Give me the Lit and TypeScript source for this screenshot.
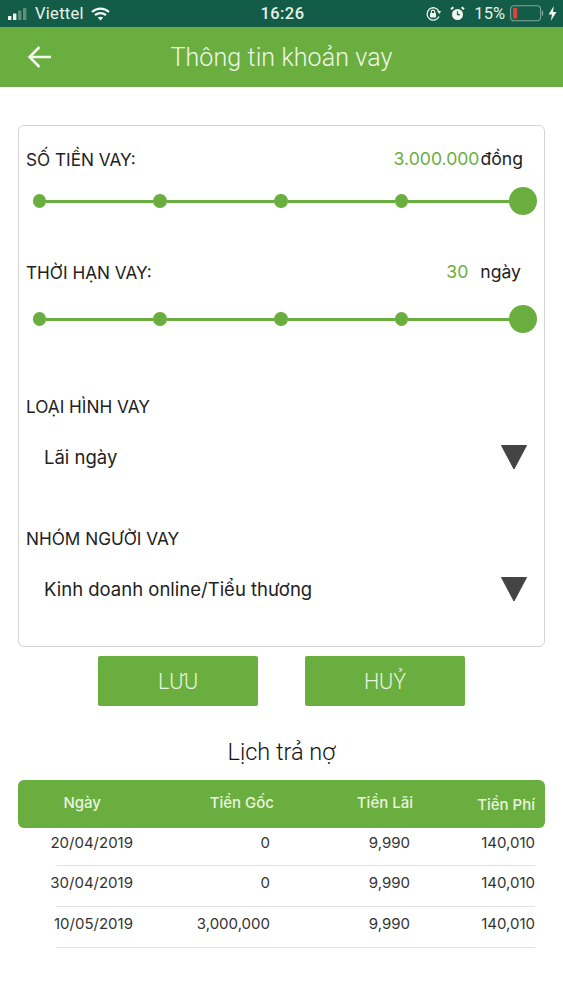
import { LitElement, html, css } from "lit";
import { customElement } from "lit/decorators.js";

const rows = [
  ["20/04/2019", "0", "9,990", "140,010"],
  ["30/04/2019", "0", "9,990", "140,010"],
  ["10/05/2019", "3,000,000", "9,990", "140,010"],
];

@customElement("app-root")
export class AppRoot extends LitElement {
  static styles = css`
    :host { display: block; width: 563px; height: 1000px; background: #fff; font-family: Inter, Roboto, sans-serif; color: #222; overflow: hidden; }
    .status { height: 27px; background: #135c47; color: #e6f2ea; display: grid; grid-template-columns: 1fr auto 1fr; align-items: center; padding: 0 6px 0 8px; box-sizing: border-box; font-size: 16.5px; font-family: Roboto, sans-serif; }
    .sl, .sr { display: flex; align-items: center; }
    .sl { gap: 5px; }
    .sr { justify-content: flex-end; }
    .viettel { letter-spacing: .3px; }
    .time { font-weight: 500; font-size: 16.5px; letter-spacing: .4px; }
    .appbar { height: 60px; background: #6aae40; color: #f0f7e8; display: flex; align-items: center; padding-left: 27px; }
    .appbar svg { display: block; }
    .title { flex: 1; text-align: center; font-family: Roboto, sans-serif; font-size: 25px; font-weight: 300; margin-right: 52px; letter-spacing: .1px; }
    .card { margin: 38px 18px 0; height: 522px; box-sizing: border-box; border: 1px solid #d4d4d4; border-radius: 6px; padding: 0 7px; }
    .lr { display: flex; justify-content: space-between; align-items: center; height: 22px; font-size: 17.2px; }
    .lab { font-weight: 400; color: #222; padding-top: 2px; }
    .val { display: flex; font-size: 17.6px; font-weight: 400; color: #222; padding-top: 1px; }
    .val b { font-weight: 400; color: #6aae40; }
    .amount { margin-top: 21px; padding-right: 14px; }
    .amount b { margin-right: 1px; }
    .term { margin-top: 45px; padding-right: 16px; }
    .term b { margin-right: 12px; }
    .slider { display: flex; align-items: center; height: 28px; padding-left: 6.5px; }
    .s1 { margin-top: 18px; }
    .s2 { margin-top: 23px; }
    .dot { width: 13.5px; height: 13.5px; border-radius: 50%; background: #6aae40; flex: none; }
    .dot.big { width: 28px; height: 28px; margin-left: -7px; margin-right: .5px; }
    .line { height: 3px; flex: 1; background: #6aae40; }
    .sect { font-size: 17.2px; font-weight: 400; height: 22px; line-height: 22px; padding-top: 1px; }
    .s-loan { margin-top: 62px; }
    .s-group { margin-top: 55px; }
    .pick { display: flex; justify-content: space-between; align-items: center; height: 30px; margin-top: 24px; padding: 0 9px 0 18px; font-size: 18.5px; font-weight: 400; color: #222; }
    .pick svg { display: block; }
    .btns { display: flex; justify-content: center; gap: 47px; margin-top: 9px; }
    .btn { width: 160px; height: 50px; background: #6aae40; color: #e9f4df; border-radius: 2px; display: flex; align-items: center; justify-content: center; font-family: Roboto, sans-serif; font-size: 21.5px; font-weight: 300; }
    .sched { text-align: center; font-family: Roboto, sans-serif; font-size: 23.5px; font-weight: 300; color: #111; margin-top: 30px; height: 32px; line-height: 32px; }
    .thead { margin: 12px 18px 0; height: 48px; background: #6aae40; border-radius: 6px; color: #e9f4df; font-size: 15px; font-weight: 500; display: grid; grid-template-columns: 83px 173px 139px 122px; align-items: center; box-sizing: border-box; padding: 0 10px 3px 0; }
    .thead span { text-align: right; }
    .thead .c3 { padding-top: 4px; }
    .row { display: grid; grid-template-columns: 115px 137px 140px 125px; margin: 0 28px 0 18px; height: 41px; box-sizing: border-box; font-size: 15px; font-weight: 400; color: #333; text-align: right; padding-top: 7px; position: relative; }
    .row.first { height: 38px; padding-top: 5px; }
    .row::after { content: ""; position: absolute; left: 38px; right: 0; bottom: 0; height: 1px; background: #e3e3e3; }
  `;

  private slider(cls: string) {
    return html`<div class="slider ${cls}">
      <span class="dot"></span><span class="line"></span>
      <span class="dot"></span><span class="line"></span>
      <span class="dot"></span><span class="line"></span>
      <span class="dot"></span><span class="line"></span>
      <span class="dot big"></span>
    </div>`;
  }

  private caret() {
    return html`<svg width="28" height="26" viewBox="0 0 28 26"><path d="M1.5 1.5H26.5L14 25Z" fill="#444" stroke="#444" stroke-width="1" stroke-linejoin="round"/></svg>`;
  }

  render() {
    return html`
      <div class="status">
        <div class="sl">
          <svg width="22" height="14" viewBox="0 0 22 14">
            <rect x="0" y="9" width="3.4" height="4" rx=".6" fill="#f2f7f2"/>
            <rect x="5" y="6.5" width="3.4" height="6.5" rx=".6" fill="#f2f7f2"/>
            <rect x="10" y="3.5" width="3.4" height="9.5" rx=".6" fill="#5c8f7c"/>
            <rect x="15" y="1" width="3.4" height="12" rx=".6" fill="#5c8f7c"/>
          </svg>
          <span class="viettel">Viettel</span>
          <svg style="margin-left:2px" width="19" height="14" viewBox="0 0 19 14">
            <path d="M1 5C6 .5 13 .5 18 5" fill="none" stroke="#f2f7f2" stroke-width="2.2"/>
            <path d="M4 8.2C7.2 5.4 11.8 5.4 15 8.2" fill="none" stroke="#f2f7f2" stroke-width="2.2"/>
            <path d="M6.8 10.6 9.5 13.5 12.2 10.6C10.6 9.3 8.4 9.3 6.8 10.6Z" fill="#f2f7f2"/>
          </svg>
        </div>
        <div class="time">16:26</div>
        <div class="sr">
          <svg width="17" height="16" viewBox="0 0 17 16" style="margin-right:8px">
            <path d="M13.8 5A6.2 6.2 0 1 0 14 10.5" fill="none" stroke="#f2f7f2" stroke-width="1.3"/>
            <path d="M12 5H16L14.5 8Z" fill="#f2f7f2"/>
            <rect x="5" y="7" width="6" height="4.5" rx=".7" fill="#f2f7f2"/>
            <path d="M6.3 7V5.8A1.7 1.7 0 0 1 9.7 5.8V7" fill="none" stroke="#f2f7f2" stroke-width="1.1"/>
          </svg>
          <svg width="15" height="15" viewBox="0 0 15 15" style="margin-right:9px">
            <circle cx="7.5" cy="8.5" r="5.5" fill="#f2f7f2"/>
            <path d="M7.5 5.2V8.7H10" fill="none" stroke="#135c47" stroke-width="1.2"/>
            <path d="M1 3.2 3.4 1.2M14 3.2 11.6 1.2" stroke="#f2f7f2" stroke-width="2"/>
          </svg>
          <span>15%</span>
          <svg width="34" height="17" viewBox="0 0 34 17" style="margin-left:5px">
            <rect x=".6" y=".8" width="30" height="15" rx="3.5" fill="none" stroke="#7da898" stroke-width="1.1"/>
            <rect x="3" y="3" width="4.2" height="10.5" rx="1" fill="#e0413a"/>
            <path d="M32.5 6v4.5" stroke="#7da898" stroke-width="1.3"/>
          </svg>
          <svg width="9" height="15" viewBox="0 0 9 15" style="margin-left:4px">
            <path d="M5.8 0 .5 8.5H4L2.8 15 8.5 6H5Z" fill="#f2f7f2"/>
          </svg>
        </div>
      </div>
      <div class="appbar">
        <svg width="25" height="24" viewBox="0 0 25 24">
          <path d="M24 12H2.5M12.5 2 2.5 12 12.5 22" fill="none" stroke="#f3f8ec" stroke-width="2.5"/>
        </svg>
        <div class="title">Thông tin khoản vay</div>
      </div>
      <div class="card">
        <div class="lr amount"><span class="lab">SỐ TIỀN VAY:</span><span class="val"><b>3.000.000</b>đồng</span></div>
        ${this.slider("s1")}
        <div class="lr term"><span class="lab">THỜI HẠN VAY:</span><span class="val"><b>30</b>ngày</span></div>
        ${this.slider("s2")}
        <div class="sect s-loan">LOẠI HÌNH VAY</div>
        <div class="pick"><span>Lãi ngày</span>${this.caret()}</div>
        <div class="sect s-group">NHÓM NGƯỜI VAY</div>
        <div class="pick"><span>Kinh doanh online/Tiểu thương</span>${this.caret()}</div>
      </div>
      <div class="btns"><div class="btn">LƯU</div><div class="btn">HUỶ</div></div>
      <div class="sched">Lịch trả nợ</div>
      <div class="thead">
        <span>Ngày</span><span>Tiền Gốc</span><span>Tiền Lãi</span><span class="c3">Tiền Phí</span>
      </div>
      ${rows.map((r, i) => html`<div class="row ${i === 0 ? "first" : ""}">${r.map(c => html`<span>${c}</span>`)}</div>`)}
    `;
  }
}
